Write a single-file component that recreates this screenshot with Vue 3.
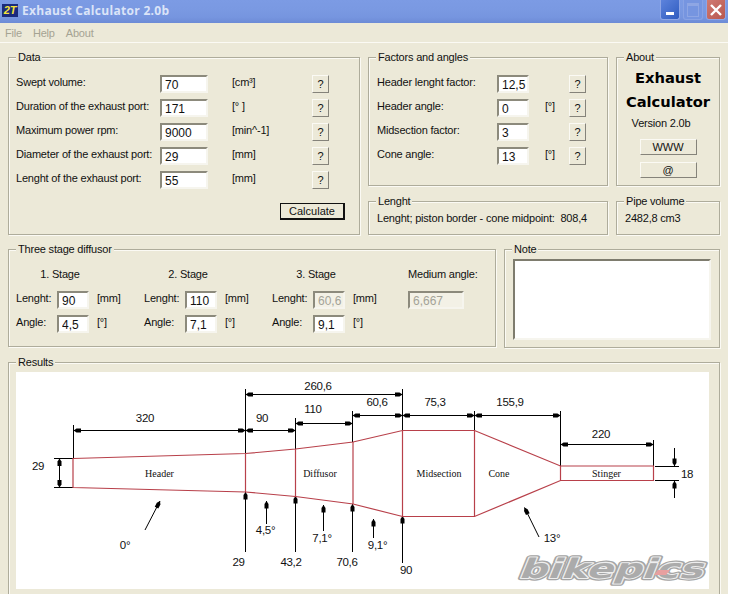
<script setup>
const dataRows = [
  { label: 'Swept volume:', value: '70', unit: '[cm³]' },
  { label: 'Duration of the exhaust port:', value: '171', unit: '[° ]' },
  { label: 'Maximum power rpm:', value: '9000', unit: '[min^-1]' },
  { label: 'Diameter of the exhaust port:', value: '29', unit: '[mm]' },
  { label: 'Lenght of the exhaust port:', value: '55', unit: '[mm]' },
]

const factorRows = [
  { label: 'Header lenght factor:', value: '12,5', unit: '' },
  { label: 'Header angle:', value: '0', unit: '[°]' },
  { label: 'Midsection factor:', value: '3', unit: '' },
  { label: 'Cone angle:', value: '13', unit: '[°]' },
]

const stages = [
  { title: '1. Stage', length: '90', angle: '4,5', locked: false },
  { title: '2. Stage', length: '110', angle: '7,1', locked: false },
  { title: '3. Stage', length: '60,6', angle: '9,1', locked: true },
]

// diagram numbers are in page coordinates, the svg viewBox starts at 16,371
const outline = '73,457.5 245.5,452.5 295.5,448 353,441 402.5,429.5 474.5,429.5 560.5,465 653.5,465 653.5,479.5 560.5,479.5 474.5,515.5 402.5,515.5 353,503 295.5,495.5 245.5,491 73,486.5'
const sections = [
  'M245.5 452.5V491', 'M295.5 448V495.5', 'M353 441V503', 'M402.5 429.5V515.5', 'M474.5 429.5V515.5', 'M560.5 465V479.5',
]

const plainLines = [
  'M73.5 424V457', 'M245.5 388V452', 'M295.5 417V448', 'M352.5 410V441', 'M402.5 388V429',
  'M474.5 410V429', 'M560.5 410V465', 'M653.5 439V465', 'M54 457.5H73', 'M54 486.5H73',
  'M655 465.5H679', 'M655 479.5H679',
]

// arrow at both ends
const dimLines = [
  [73.5, 429.5, 245.5, 429.5], [245.5, 429.5, 295.5, 429.5], [245.5, 393.5, 402.5, 393.5],
  [295.5, 422.5, 352.5, 422.5], [352.5, 414.5, 402.5, 414.5], [402.5, 414.5, 474.5, 414.5],
  [474.5, 414.5, 560.5, 414.5], [560.5, 443.5, 653.5, 443.5], [59.5, 457.5, 59.5, 486.5],
]

// arrow at the end only
const leaders = [
  [245.5, 551, 245.5, 491], [295.5, 551, 295.5, 495], [352.5, 551, 352.5, 503], [402.5, 562, 402.5, 515],
  [145, 529, 160, 500], [266.5, 523, 266.5, 500], [323.5, 530, 323.5, 504], [373.5, 537, 373.5, 518],
  [539, 536, 524.5, 506.5], [674.5, 447, 674.5, 465], [674.5, 497, 674.5, 480],
]

const dimTexts = [
  { t: '320', x: 145, y: 417 }, { t: '90', x: 262, y: 417 }, { t: '260,6', x: 318, y: 385 },
  { t: '110', x: 313, y: 408 }, { t: '60,6', x: 377, y: 401 }, { t: '75,3', x: 435, y: 401 },
  { t: '155,9', x: 510, y: 401 }, { t: '220', x: 601, y: 432.5 }, { t: '18', x: 687, y: 473 },
  { t: '29', x: 38, y: 465 }, { t: '0°', x: 125, y: 544 }, { t: '4,5°', x: 265.5, y: 528.5 },
  { t: '7,1°', x: 322, y: 536.5 }, { t: '9,1°', x: 377.5, y: 544 }, { t: '13°', x: 552, y: 537 },
  { t: '29', x: 238.5, y: 561 }, { t: '43,2', x: 291, y: 561 }, { t: '70,6', x: 347, y: 561 }, { t: '90', x: 406, y: 568.5 },
]

const partTexts = [
  { t: 'Header', x: 159.5 }, { t: 'Diffusor', x: 320 }, { t: 'Midsection', x: 439 }, { t: 'Cone', x: 499 }, { t: 'Stinger', x: 606.5 },
]

const segment = (l) => `M${l[0]} ${l[1]}L${l[2]} ${l[3]}`
</script>

<template>
  <div class="window">
    <header class="titlebar">
      <span class="app-icon">2T</span>
      <span class="title">Exhaust Calculator 2.0b</span>
      <div class="caption">
        <span class="cap cap--min"><i></i></span>
        <span class="cap cap--max"><i></i></span>
        <span class="cap cap--close">
          <svg width="14" height="14" viewBox="0 0 14 14"><path d="M2 2L12 12M12 2L2 12" stroke="#fff" stroke-width="2.4" /></svg>
        </span>
      </div>
    </header>

    <nav class="menu">
      <span>File</span>
      <span>Help</span>
      <span>About</span>
    </nav>

    <main class="content">
      <div class="top">
        <section class="group group--data">
          <span class="legend">Data</span>
          <div class="form form--data">
            <template v-for="row in dataRows" :key="row.label">
              <span>{{ row.label }}</span>
              <input class="field" :value="row.value" readonly />
              <span>{{ row.unit }}</span>
              <button class="btn btn--help">?</button>
            </template>
          </div>
          <div class="calc-row"><button class="btn btn--calc">Calculate</button></div>
        </section>

        <section class="group group--factors">
          <span class="legend">Factors and angles</span>
          <div class="form form--factors">
            <template v-for="row in factorRows" :key="row.label">
              <span>{{ row.label }}</span>
              <input class="field" :value="row.value" readonly />
              <span>{{ row.unit }}</span>
              <button class="btn btn--help">?</button>
            </template>
          </div>
        </section>

        <section class="group group--about">
          <span class="legend">About</span>
          <div class="brand">Exhaust</div>
          <div class="brand">Calculator</div>
          <div class="version">Version 2.0b</div>
          <button class="btn btn--about">WWW</button>
          <button class="btn btn--about">@</button>
        </section>

        <section class="group group--line">
          <span class="legend">Lenght</span>
          <span>Lenght; piston border - cone midpoint:&nbsp; 808,4</span>
        </section>

        <section class="group group--line">
          <span class="legend">Pipe volume</span>
          <span>2482,8 cm3</span>
        </section>
      </div>

      <div class="middle">
        <section class="group group--stages">
          <span class="legend">Three stage diffusor</span>
          <div class="stage" v-for="s in stages" :key="s.title">
            <div class="stage__title">{{ s.title }}</div>
            <div class="stage__row">
              <span>Lenght:</span>
              <input class="field" :class="{ 'field--off': s.locked }" :value="s.length" readonly />
              <span>[mm]</span>
            </div>
            <div class="stage__row">
              <span>Angle:</span>
              <input class="field" :value="s.angle" readonly />
              <span>[°]</span>
            </div>
          </div>
          <div class="stage stage--medium">
            <div class="stage__title">Medium angle:</div>
            <input class="field field--off field--medium" value="6,667" readonly />
          </div>
        </section>

        <section class="group group--note">
          <span class="legend">Note</span>
          <textarea class="note"></textarea>
        </section>
      </div>

      <section class="group group--results">
        <span class="legend">Results</span>
        <svg class="diagram" width="693" height="217" viewBox="16 371 693 217">
          <defs>
            <marker id="tip" markerUnits="userSpaceOnUse" markerWidth="10" markerHeight="6" refX="10" refY="3" orient="auto-start-reverse" viewBox="0 0 10 6">
              <path d="M10 3L7 1H2.5V5H7Z" fill="#000" />
            </marker>
          </defs>

          <path v-for="d in plainLines" :key="d" :d="d" class="ln" />
          <path v-for="l in dimLines" :key="segment(l)" :d="segment(l)" class="ln" marker-start="url(#tip)" marker-end="url(#tip)" />
          <path v-for="l in leaders" :key="segment(l)" :d="segment(l)" class="ln" marker-end="url(#tip)" />

          <polygon :points="outline" class="pipe" />
          <path v-for="d in sections" :key="d" :d="d" class="pipe" />

          <text v-for="d in dimTexts" :key="d.t + d.x" :x="d.x" :y="d.y" class="dim">{{ d.t }}</text>
          <text v-for="p in partTexts" :key="p.t" :x="p.x" y="472" class="part">{{ p.t }}</text>

          <!-- bikepics watermark -->
          <g transform="translate(512 577) skewX(-22)">
            <text class="logo logo--edge" x="6" textLength="184" lengthAdjust="spacingAndGlyphs">bikepics</text>
            <text class="logo logo--ring" x="6" textLength="184" lengthAdjust="spacingAndGlyphs">bikepics</text>
            <text class="logo logo--core" x="6" textLength="184" lengthAdjust="spacingAndGlyphs">bikepics</text>
          </g>
          <polygon points="654,574 666,574 670,569 658,569" fill="#e8a0a0" />
        </svg>
      </section>
    </main>
  </div>
</template>

<style scoped>
.window {
  width: 728px;
  height: 594px;
  overflow: hidden;
  background: #ece9d8;
  font-family: "Liberation Sans", Arial, sans-serif;
  font-size: 11px;
  letter-spacing: -0.2px;
  color: #111;
}

/* ── Title bar ── */
.titlebar {
  height: 23px;
  display: flex;
  align-items: center;
  padding-left: 2px;
  background: linear-gradient(180deg, #7c9be4 0%, #7a99e2 40%, #7695df 75%, #6d8bd6 100%);
}

.app-icon {
  width: 16px;
  height: 13px;
  line-height: 13px;
  margin-top: -3px;
  text-align: center;
  background: #1a2a7c;
  color: #f4e13a;
  font-size: 11px;
  font-weight: 700;
  font-style: italic;
}

.title {
  margin: -3px 0 0 4px;
  font-family: "Open Sans", sans-serif;
  font-size: 12px;
  font-weight: 700;
  letter-spacing: 0.3px;
  color: #dbe4f8;
}

.caption {
  margin-left: auto;
  margin-right: 2px;
  display: flex;
  gap: 3px;
  align-self: flex-start;
}

.cap {
  width: 20px;
  height: 20px;
  box-sizing: border-box;
  border-radius: 0 0 3px 3px;
  border: 1px solid #8ea6e6;
  border-top: 0;
  display: flex;
  align-items: center;
  justify-content: center;
  position: relative;
}

.cap--min { background: linear-gradient(135deg, #5d83dc, #2f5cc0); }
.cap--min i {
  position: absolute;
  left: 5px;
  bottom: 4px;
  width: 8px;
  height: 3px;
  background: #fff;
}
.cap--max { background: #7695e0; border-color: #88a2e4; }
.cap--max i {
  width: 10px;
  height: 10px;
  border: 1px solid #8ea6e4;
  border-top-width: 3px;
}
.cap--close { background: linear-gradient(135deg, #d07a72, #b8584f); }

/* ── Menu ── */
.menu {
  height: 19px;
  display: flex;
  align-items: center;
  gap: 11px;
  padding-left: 5px;
  border-bottom: 1px solid #fbfaf4;
  color: #a5a393;
}

/* ── Groups ── */
.content {
  padding: 14px 8px 0;
}

.top {
  display: grid;
  grid-template-columns: 352px 240px 104px;
  grid-template-rows: 129px 34px;
  gap: 15px 8px;
}

.middle {
  display: grid;
  grid-template-columns: 488px 216px;
  gap: 8px;
  margin-top: 14px;
}

.group {
  position: relative;
  box-sizing: border-box;
  border: 1px solid #aeac9b;
  box-shadow: 1px 1px 0 #fbfaf4, inset 1px 1px 0 #fbfaf4;
}

.legend {
  position: absolute;
  top: -8px;
  left: 7px;
  padding: 0 2px;
  line-height: 14px;
  background: #ece9d8;
}

.group--data {
  grid-row: 1 / 3;
  padding: 17px 0 0 7px;
}

.group--factors { padding: 17px 0 0 8px; }

.group--about {
  padding-top: 8px;
  display: flex;
  flex-direction: column;
  align-items: center;
}

.group--line {
  padding: 9px 8px 0;
  line-height: 14px;
  white-space: nowrap;
}

/* ── Form rows ── */
.form {
  display: grid;
  row-gap: 6px;
  align-items: center;
}

.form--data { grid-template-columns: 144px 48px 104px 17px; }
.form--data > .field + span { padding-left: 24px; }
.form--factors { grid-template-columns: 120px 32px 40px 17px; }
.form--factors > .field + span { padding-left: 16px; }
.form > span { margin-top: -4px; white-space: nowrap; }

.field {
  width: 100%;
  height: 18px;
  box-sizing: border-box;
  margin: 0;
  padding: 2px 0 0 3px;
  border: 2px solid;
  border-color: #8c8a7c #f6f5ee #f6f5ee #8c8a7c;
  border-radius: 0;
  outline: none;
  background: #fff;
  font: inherit;
  font-size: 12px;
  color: #111;
}

.field--off {
  background: #f3f1e6;
  color: #a3a398;
}

.btn {
  box-sizing: border-box;
  margin: 0;
  padding: 0;
  border: 1px solid;
  border-color: #fbfaf4 #85837a #85837a #fbfaf4;
  border-radius: 0;
  background: #ece9d8;
  font: inherit;
  color: #111;
}

.btn--help {
  width: 17px;
  height: 18px;
}

.calc-row {
  display: flex;
  justify-content: flex-end;
  margin: 14px 14px 0 0;
}

.btn--calc {
  width: 65px;
  height: 17px;
  line-height: 13px;
  border: 1px solid #111;
  border-width: 1px 2px 2px 1px;
}

.btn--about {
  width: 57px;
  height: 17px;
  line-height: 13px;
  margin-bottom: 7px;
}

.brand {
  height: 24px;
  line-height: 24px;
  font-family: "DejaVu Sans", sans-serif;
  font-size: 14.7px;
  font-weight: 700;
  letter-spacing: 0;
  color: #000;
  white-space: nowrap;
}

.version {
  line-height: 14px;
  margin: 2px 14px 9px 0;
}

/* ── Diffusor ── */
.group--stages {
  height: 98px;
  display: grid;
  grid-template-columns: 128px 128px 136px 1fr;
  padding: 17px 0 0 7px;
}

.stage__title {
  line-height: 14px;
  margin-bottom: 10px;
  text-align: center;
  width: 88px;
}

.stage--medium .stage__title {
  width: auto;
  text-align: left;
  white-space: nowrap;
}

.stage__row {
  display: grid;
  grid-template-columns: 41px 32px auto;
  align-items: center;
  margin-bottom: 6px;
}

.stage__row > span:last-child { padding-left: 8px; }
.stage__row > span { margin-top: -4px; white-space: nowrap; }

.field--medium { width: 56px; }

/* ── Note ── */
.group--note { padding: 9px 8px 7px; }

.note {
  display: block;
  width: 100%;
  height: 81px;
  box-sizing: border-box;
  border: 2px solid;
  border-color: #7e7c6e #f6f5ee #f6f5ee #7e7c6e;
  background: #fff;
  resize: none;
  outline: none;
  margin: 0;
}

/* ── Results ── */
.group--results {
  margin-top: 14px;
  padding: 9px 0 0 7px;
  height: 260px;
}

.diagram {
  display: block;
  background: #fff;
  font-family: "Liberation Sans", Arial, sans-serif;
}

.ln {
  fill: none;
  stroke: #000;
  stroke-width: 1;
}

.pipe {
  fill: none;
  stroke: #b8404a;
  stroke-width: 1.2;
}

.dim {
  font-size: 11.5px;
  letter-spacing: -0.3px;
  fill: #111;
  text-anchor: middle;
  dominant-baseline: central;
}

.part {
  font-family: "Liberation Serif", serif;
  font-size: 10px;
  letter-spacing: 0;
  fill: #111;
  text-anchor: middle;
  dominant-baseline: central;
}

.logo {
  font-size: 27px;
  font-family: "DejaVu Sans", sans-serif;
  font-weight: 700;
  letter-spacing: 0;
  stroke-linejoin: round;
}

.logo--edge {
  fill: #a5a5a5;
  stroke: #a5a5a5;
  stroke-width: 4.5;
}

.logo--ring {
  fill: #eeeeee;
  stroke: #eeeeee;
  stroke-width: 2;
}

.logo--core {
  fill: #ababab;
}
</style>

<style>
html, body { background: #fff; }
</style>
